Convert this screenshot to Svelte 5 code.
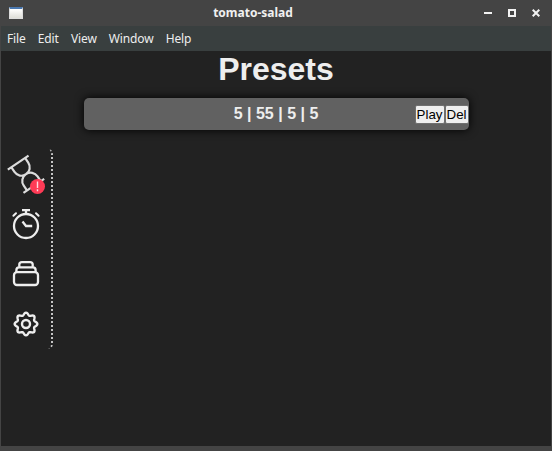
<script>
  const menu = ['File', 'Edit', 'View', 'Window', 'Help'];

  // Eight-lobed cog outline, sampled around the circle
  const gear = Array.from({ length: 97 }, (_, i) => {
    const t = (i / 96) * Math.PI * 2;
    const r = 10.1 + 1.25 * Math.cos(8 * t);
    return `${i ? 'L' : 'M'}${(15 + r * Math.cos(t)).toFixed(2)} ${(15 + r * Math.sin(t)).toFixed(2)}`;
  }).join('') + 'Z';
</script>

<div class="window">
  <header class="titlebar">
    <span class="side"><span class="app-icon"></span></span>
    <span class="title">tomato-salad</span>
    <span class="side controls">
      <svg width="8" height="8" shape-rendering="crispEdges"><path d="M0 3h8v2H0z" fill="#f2f2f2" /></svg>
      <svg width="8" height="8" shape-rendering="crispEdges"><path d="M1 1h6v6H1z" fill="none" stroke="#f2f2f2" stroke-width="2" /></svg>
      <svg width="8" height="8"><path d="M.7 .7l6.6 6.6M7.3 .7L.7 7.3" stroke="#f2f2f2" stroke-width="2" /></svg>
    </span>
  </header>
  <nav class="menubar">
    {#each menu as item}<span>{item}</span>{/each}
  </nav>
  <div class="body">
    <aside class="sidebar">
      <div class="item timer">
        <svg width="44" height="50" viewBox="0 0 44 50">
          <g transform="translate(22 25.2) rotate(-34)" fill="none" stroke="#dcdcdc" stroke-width="2.2">
            <path d="M-12.5 -14H12.5M-12.5 14H12.5" />
            <path d="M-8.3 -14V-8.3C-8.3 -3.5 -4.8 0 0 0S8.3 -3.5 8.3 -8.3V-14M-8.3 14V8.3C-8.3 3.5 -4.8 0 0 0S8.3 3.5 8.3 8.3V14" />
          </g>
        </svg>
        <span class="badge"><svg width="15" height="15"><path d="M7.5 2.5V9M7.5 10.3v1.9" stroke="#ffdce2" stroke-width="1.4" /></svg></span>
      </div>
      <div class="item">
        <svg width="30" height="36" viewBox="0 0 30 36" fill="none" stroke="#eee" stroke-width="2.3">
          <circle cx="15" cy="20" r="12" />
          <path d="M11 4.2h8M15 4v4M11.5 15.5L15 20h6.2" />
          <path d="M2.4 9.8L5 7.2M25 7.2L27.6 9.8" stroke-linecap="round" stroke-width="2" />
        </svg>
      </div>
      <div class="item">
        <svg width="30" height="30" viewBox="0 0 30 30" fill="none" stroke="#eee" stroke-width="2.3">
          <rect x="3" y="13.2" width="24" height="12.8" rx="3" />
          <path d="M5.4 13.2V11Q5.4 8.3 8 8.3H22Q24.6 8.3 24.6 11V13.2M8.3 8.3V5.6Q8.3 3.2 11 3.2H19Q21.7 3.2 21.7 5.6V8.3" />
        </svg>
      </div>
      <div class="item">
        <svg width="30" height="30" viewBox="0 0 30 30" fill="none" stroke="#eee" stroke-width="2.4">
          <path d={gear} /><circle cx="15" cy="15" r="4" />
        </svg>
      </div>
    </aside>
    <main>
      <h1>Presets</h1>
      <div class="preset">
        <span class="times">5 | 55 | 5 | 5</span>
        <div class="actions"><button>Play</button><button>Del</button></div>
      </div>
    </main>
  </div>
</div>

<style>
  .window {
    box-sizing: border-box;
    width: 552px;
    height: 451px;
    display: flex;
    flex-direction: column;
    border: solid #444;
    border-width: 0 1px 5px;
    background: #222;
    overflow: hidden;
  }
  .titlebar {
    box-sizing: border-box;
    height: 26px;
    flex: none;
    display: flex;
    align-items: center;
    background: #444;
    padding: 0 11px 0 8px;
    color: #f0f0f0;
    font: bold 12px/25px "Noto Sans", sans-serif;
  }
  .side { width: 56px; display: flex; }
  .title { flex: 1; text-align: center; padding-right: 43px; padding-bottom: 1px; }
  .controls { justify-content: space-between; }
  .app-icon {
    box-sizing: border-box;
    width: 14px;
    height: 12px;
    border: 1px solid #ddd;
    border-top: 2px solid #4a78b0;
    background: linear-gradient(#fff, #deded8);
  }
  .menubar {
    height: 25px;
    flex: none;
    display: flex;
    gap: 12.1px;
    padding-left: 6px;
    background: #393f3f;
    color: #eee;
    font: 12px/25px "Noto Sans", sans-serif;
    letter-spacing: -0.12px;
  }
  .body {
    flex: 1;
    display: flex;
    font-family: "Liberation Sans", Arial, sans-serif;
    color: #eee;
  }
  .sidebar {
    box-sizing: border-box;
    width: 52px;
    height: 200px;
    margin-top: 98px;
    flex: none;
    border-right: 2px dotted #c4c4c4;
    border-radius: 5px;
  }
  .item {
    height: 50px;
    display: flex;
    align-items: center;
    justify-content: center;
    position: relative;
  }
  .badge {
    position: absolute;
    left: 29px;
    top: 30px;
    width: 15px;
    height: 15px;
    border-radius: 50%;
    background: #ff3b56;
  }
  .badge svg { display: block; }
  main { width: 385px; margin-left: 31px; }
  h1 { margin: 0; padding-right: 1px; font-size: 32px; line-height: 36px; text-align: center; }
  .preset {
    height: 32px;
    margin-top: 11px;
    display: flex;
    align-items: center;
    position: relative;
    border-radius: 5px;
    background: #616161;
    box-shadow: 0 0 10px #000;
  }
  .times { flex: 1; padding-right: 1px; text-align: center; font-weight: bold; font-size: 16px; line-height: 32px; }
  .actions { position: absolute; right: 0.5px; top: 7px; display: flex; }
  button {
    box-sizing: border-box;
    height: 19px;
    padding: 0 1px;
    border: 1px solid #707070;
    border-radius: 2px;
    background: #efefef;
    color: #000;
    font: 13.333px/15px "Liberation Sans", Arial, sans-serif;
  }
</style>
